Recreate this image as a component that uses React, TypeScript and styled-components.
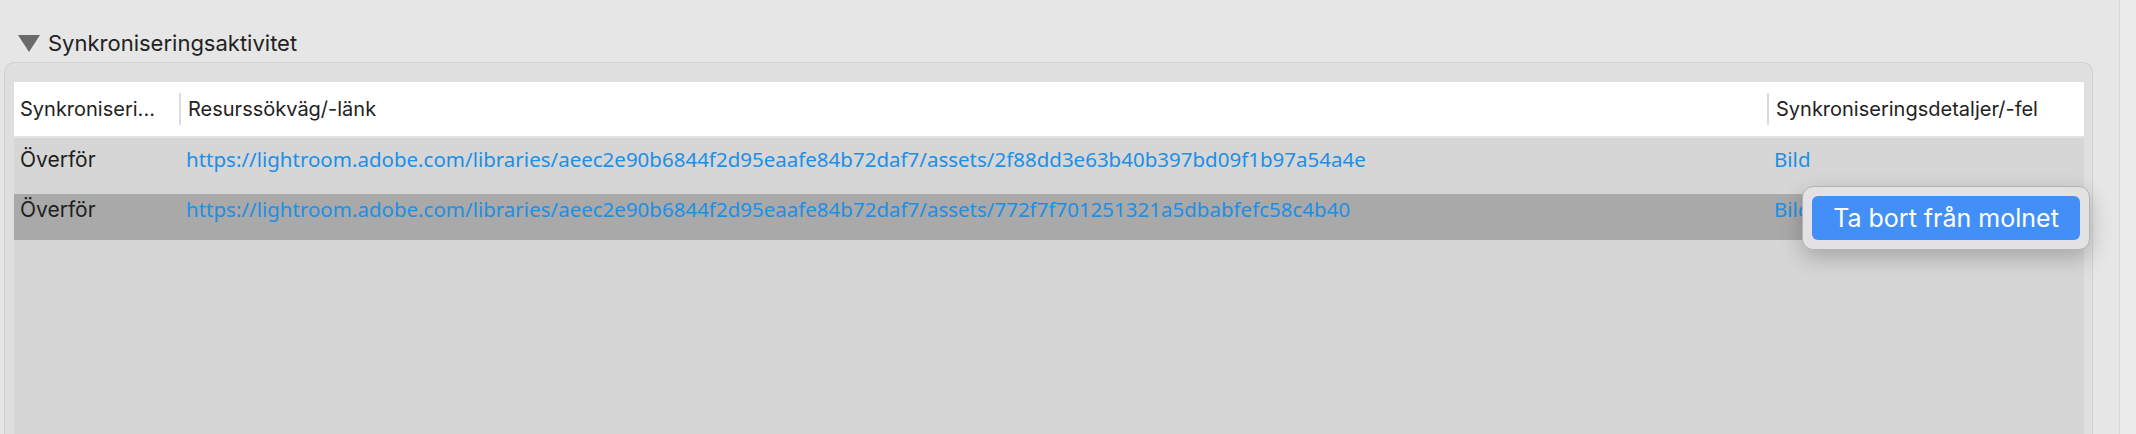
import { FC } from "react";
import styled, { createGlobalStyle } from "styled-components";

const GlobalStyle = createGlobalStyle`
	html, body {
		margin: 0;
		padding: 0;
		height: 100%;
		overflow: hidden;
		background: #e6e6e6;
	}
	#root {
		height: 100%;
	}
`

const SYSTEM_FONT = `Inter, "Noto Sans", "Liberation Sans", sans-serif`;
const LINK_FONT = `"Noto Sans", "Open Sans", "Liberation Sans", sans-serif`;

interface IRow {
	status: string;
	path: string;
	details: string;
	isSelected?: boolean;
}

const ROWS: IRow[] = [
	{
		status: "Överför",
		path: "https://lightroom.adobe.com/libraries/aeec2e90b6844f2d95eaafe84b72daf7/assets/2f88dd3e63b40b397bd09f1b97a54a4e",
		details: "Bild",
	},
	{
		status: "Överför",
		path: "https://lightroom.adobe.com/libraries/aeec2e90b6844f2d95eaafe84b72daf7/assets/772f7f701251321a5dbabfefc58c4b40",
		details: "Bild",
		isSelected: true,
	},
];

const Disclosure: FC = () => (
	<SDisclosure viewBox="0 0 22 17" width={22} height={17}>
		<polygon points="0,0 22,0 11,17" fill="#6a6a6a" />
	</SDisclosure>
)

export default function App() {
	return (
		<>
			<GlobalStyle />
			<SPage>
				<SMain>
					<SSectionHeader>
						<Disclosure />
						<STitle>Synkroniseringsaktivitet</STitle>
					</SSectionHeader>
					<SPanel>
						<STable>
							<SHeader>
								<SHeaderCell>Synkroniseri...</SHeaderCell>
								<SHeaderCell hasDivider={true}>Resurssökväg/-länk</SHeaderCell>
								<SHeaderCell hasDivider={true}>Synkroniseringsdetaljer/-fel</SHeaderCell>
							</SHeader>
							<SBody>
								{ROWS.map((row, idx) => (
									<SRow key={'row-' + idx} isSelected={!!row.isSelected}>
										<SStatusCell>{row.status}</SStatusCell>
										<SLinkCell>{row.path}</SLinkCell>
										<SLinkCell>{row.details}</SLinkCell>
									</SRow>
								))}
							</SBody>
							<SContextMenu>
								<SMenuItem>Ta bort från molnet</SMenuItem>
							</SContextMenu>
						</STable>
					</SPanel>
				</SMain>
				<SSideStrip />
			</SPage>
		</>
	)
}

const SPage = styled.div`
	display: flex;
	height: 100%;
	background: #e6e6e6;
`

const SMain = styled.div`
	flex: 1;
	display: flex;
	flex-direction: column;
	padding: 0 26px 0 4px;
	min-width: 0;
`

const SSectionHeader = styled.div`
	display: flex;
	align-items: center;
	gap: 8px;
	height: 38px;
	padding: 24px 0 0 14px;
	flex-shrink: 0;
`

const SDisclosure = styled.svg`
	display: block;
	flex-shrink: 0;
`

const STitle = styled.span`
	font-family: ${SYSTEM_FONT};
	font-size: 22px;
	color: #222;
`

const SPanel = styled.div`
	flex: 1;
	display: flex;
	flex-direction: column;
	background: #dfdfdf;
	border: 1px solid #d1d1d1;
	border-bottom: none;
	border-radius: 10px 10px 0 0;
	padding: 19px 8px 0 9px;
	min-height: 0;
`

const STable = styled.div`
	position: relative;
	flex: 1;
	background: #d6d6d6;
`

const SHeader = styled.div`
	display: grid;
	grid-template-columns: 165px 1588px 1fr;
	height: 54px;
	background: #ffffff;
	border-bottom: 2px solid #e4e4e4;
`

const SHeaderCell = styled.div<{ hasDivider?: boolean }>`
	display: flex;
	align-items: center;
	padding-left: ${({ hasDivider }) => hasDivider ? '7px' : '6px'};
	font-family: ${SYSTEM_FONT};
	font-size: 20px;
	color: #222;
	white-space: nowrap;
	overflow: hidden;
	border-left: ${({ hasDivider }) => hasDivider ? '2px solid #dcdcdc' : 'none'};
	margin: 11px 0;
`

const SBody = styled.div`
	display: flex;
	flex-direction: column;
	gap: 4px;
	padding-top: 6px;
`

const SRow = styled.div<{ isSelected: boolean }>`
	display: grid;
	grid-template-columns: 165px 1588px 1fr;
	height: 46px;
	background: ${({ isSelected }) => isSelected ? '#a9a9a9' : 'transparent'};
`

const SStatusCell = styled.div`
	padding: 3px 0 0 6px;
	font-family: ${SYSTEM_FONT};
	font-size: 21px;
	color: #1e1e1e;
	white-space: nowrap;
`

const SLinkCell = styled.div`
	padding: 1px 0 0 7px;
	font-family: ${LINK_FONT};
	font-size: 20.5px;
	color: #1c8fe6;
	white-space: nowrap;
	overflow: hidden;
`

const SContextMenu = styled.div`
	position: absolute;
	left: 1788px;
	top: 104px;
	width: 268px;
	padding: 9px;
	background: #e3e1e3;
	border: 1px solid #b4b4b4;
	border-radius: 11px;
	box-shadow: 0 8px 22px rgba(0, 0, 0, 0.22);
`

const SMenuItem = styled.div`
	display: flex;
	align-items: center;
	justify-content: center;
	height: 44px;
	border-radius: 6px;
	background: #4290f7;
	color: #ffffff;
	font-family: ${SYSTEM_FONT};
	font-size: 25px;
`

const SSideStrip = styled.div`
	width: 16px;
	flex-shrink: 0;
	background: #ebebeb;
	border-left: 1px solid #d6d6d6;
`
